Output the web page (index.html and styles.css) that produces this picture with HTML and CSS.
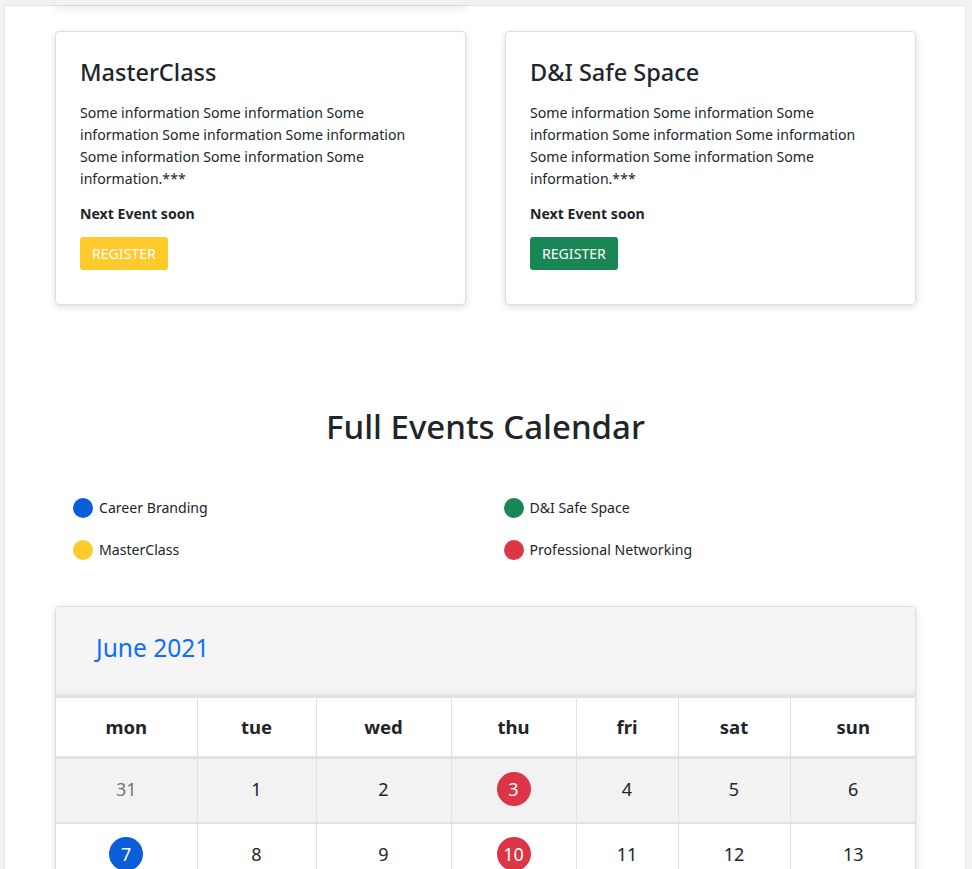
FILE: index.html
```html
<!DOCTYPE html>
<html lang="en">
<head>
<meta charset="utf-8">
<title>Events</title>
<link rel="stylesheet" href="styles.css">
</head>
<body>
<div class="prev-tail"></div>
<main class="panel">
  <section class="cards">
    <article class="card">
      <h3 class="card-title">MasterClass</h3>
      <p class="card-text">Some information Some information Some information Some information Some information Some information Some information Some information.***</p>
      <p class="next">Next Event soon</p>
      <button class="btn btn-yellow">REGISTER</button>
    </article>
    <article class="card">
      <h3 class="card-title">D&amp;I Safe Space</h3>
      <p class="card-text">Some information Some information Some information Some information Some information Some information Some information Some information.***</p>
      <p class="next">Next Event soon</p>
      <button class="btn btn-green">REGISTER</button>
    </article>
  </section>

  <h2 class="section-title">Full Events Calendar</h2>

  <ul class="legend">
    <li><span class="dot blue"></span>Career Branding</li>
    <li><span class="dot green"></span>D&amp;I Safe Space</li>
    <li><span class="dot yellow"></span>MasterClass</li>
    <li><span class="dot red"></span>Professional Networking</li>
  </ul>

  <section class="calendar">
    <header class="cal-head">June 2021</header>
    <table class="cal-table">
      <colgroup>
        <col class="c1"><col class="c2"><col class="c3"><col class="c4"><col class="c5"><col class="c6"><col class="c7">
      </colgroup>
      <thead>
        <tr><th>mon</th><th>tue</th><th>wed</th><th>thu</th><th>fri</th><th>sat</th><th>sun</th></tr>
      </thead>
      <tbody>
        <tr class="shade">
          <td class="muted">31</td><td>1</td><td>2</td><td><span class="ev red">3</span></td><td>4</td><td>5</td><td>6</td>
        </tr>
        <tr>
          <td><span class="ev blue">7</span></td><td>8</td><td>9</td><td><span class="ev red">10</span></td><td>11</td><td>12</td><td>13</td>
        </tr>
      </tbody>
    </table>
  </section>
</main>
</body>
</html>
```
FILE: styles.css
```css
* { box-sizing: border-box; }
html, body { margin: 0; }
body {
  background: #f1f2f2;
  font-family: "Noto Sans", "Open Sans", sans-serif;
  color: #212529;
  padding: 5px 6px 0 4px;
  overflow: hidden;
}
.prev-tail {
  position: relative;
  z-index: 2;
  height: 5px;
  margin-top: -5px;
  margin-left: 51px;
  width: 411px;
  background: #f1f2f2;
  box-shadow: 0 3px 8px rgba(0, 0, 0, 0.13);
}
.panel {
  background: #fff;
  border: 1px solid #e2e4e5;
  border-bottom: none;
  min-height: 900px;
  padding: 25px 0 0 50px;
}
.cards {
  width: 861px;
  display: grid;
  grid-template-columns: 411px 411px;
  column-gap: 39px;
}
.card {
  border: 1px solid #dcdfe2;
  border-radius: 4px;
  box-shadow: 0 2px 7px rgba(0, 0, 0, 0.14);
  padding: 26px 25px 34px 24px;
}
.card-title {
  margin: 0 0 15px;
  font-size: 23.5px;
  font-weight: 500;
  line-height: 29px;
}
.card-text {
  margin: 0 0 13px;
  font-size: 14.1px;
  line-height: 22px;
}
.next {
  margin: 0 0 12px;
  font-size: 14.1px;
  line-height: 22px;
  font-weight: 700;
}
.btn {
  display: block;
  border: none;
  border-radius: 3px;
  color: #fff;
  font-family: inherit;
  font-size: 14.1px;
  height: 33px;
  padding: 0 12px;
}
.btn-yellow { background: #ffca2c; }
.btn-green { background: #198754; }

.section-title {
  width: 861px;
  text-align: center;
  font-size: 33px;
  font-weight: 500;
  line-height: 40px;
  margin: 102px 0 50px;
}
.legend {
  list-style: none;
  width: 861px;
  margin: 0;
  padding: 0;
  display: grid;
  grid-template-columns: 1fr 1fr;
  row-gap: 21px;
}
.legend li {
  display: flex;
  align-items: center;
  gap: 6px;
  padding: 0 18px;
  font-size: 14.1px;
  line-height: 21px;
}
.dot {
  width: 20px;
  height: 20px;
  border-radius: 50%;
  display: inline-block;
}
.blue { background: #0b5ed7; }
.green { background: #198754; }
.yellow { background: #ffca2c; }
.red { background: #dc3545; }

.calendar {
  width: 861px;
  margin-top: 46px;
  border: 1px solid #dcdfe2;
  border-radius: 4px;
  box-shadow: 0 2px 7px rgba(0, 0, 0, 0.14);
  overflow: hidden;
}
.cal-head {
  background: #f5f5f5;
  color: #0d6efd;
  font-size: 24.5px;
  line-height: 29px;
  padding: 26px 40px 33px;
  box-shadow: inset 0 -6px 6px -4px rgba(0, 0, 0, 0.06);
}
.cal-table {
  width: 100%;
  border-collapse: collapse;
  table-layout: fixed;
  border-top: 3px solid #dee2e6;
}
.c1 { width: 141px; }
.c2 { width: 119px; }
.c3 { width: 135px; }
.c4 { width: 125px; }
.c5 { width: 102px; }
.c6 { width: 112px; }
.c7 { width: 126px; }
.cal-table th, .cal-table td {
  border-left: 1px solid #dee2e6;
  text-align: center;
  padding: 0;
}
.cal-table th:first-child, .cal-table td:first-child { border-left: none; }
.cal-table th {
  height: 61px;
  font-size: 18.5px;
  font-weight: 700;
  border-bottom: 3px solid #dee2e6;
  padding-bottom: 2px;
}
.cal-table td {
  height: 65px;
  font-size: 18px;
  border-bottom: 2px solid #dee2e6;
  padding-bottom: 2px;
}
.shade td { background: #f2f2f2; }
.muted { color: #6c757d; }
.ev {
  display: inline-flex;
  align-items: center;
  justify-content: center;
  width: 34px;
  height: 34px;
  border-radius: 50%;
  color: #fff;
}
```
